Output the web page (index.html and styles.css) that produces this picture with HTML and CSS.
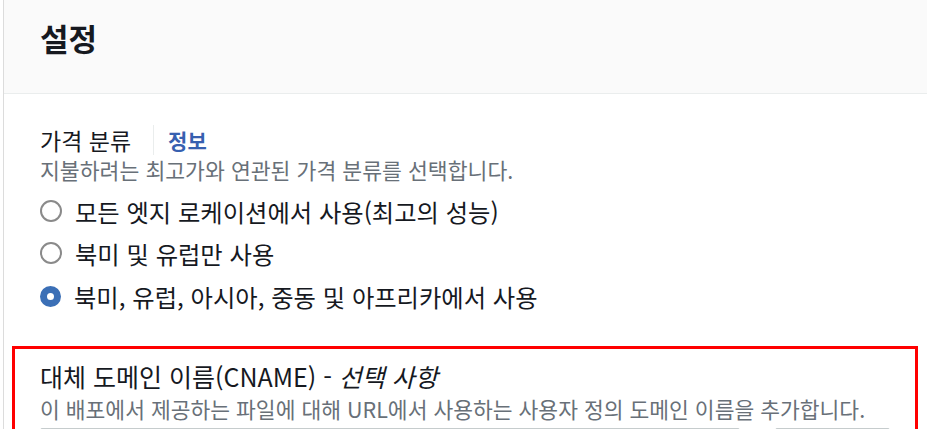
FILE: index.html
```html
<!DOCTYPE html>
<html lang="ko">
<head>
    <meta charset="UTF-8">
    <meta name="viewport" content="width=device-width, initial-scale=1.0">
    <title>설정</title>
    <link rel="stylesheet" href="styles.css">
</head>
<body>
    <div class="panel">
        <div class="panel-header">
            <h2>설정</h2>
        </div>

        <div class="panel-body">
            <div class="field">
                <div class="field-label">
                    <span>가격 분류</span>
                    <a href="#" class="info-link">정보</a>
                </div>
                <div class="field-desc">지불하려는 최고가와 연관된 가격 분류를 선택합니다.</div>
                <div class="radio-group">
                    <label class="radio-row">
                        <input type="radio" name="priceClass" value="all">
                        <span class="radio-mark"></span>
                        <span>모든 엣지 로케이션에서 사용(최고의 성능)</span>
                    </label>
                    <label class="radio-row">
                        <input type="radio" name="priceClass" value="na-eu">
                        <span class="radio-mark"></span>
                        <span>북미 및 유럽만 사용</span>
                    </label>
                    <label class="radio-row">
                        <input type="radio" name="priceClass" value="na-eu-asia" checked>
                        <span class="radio-mark"></span>
                        <span>북미, 유럽, 아시아, 중동 및 아프리카에서 사용</span>
                    </label>
                </div>
            </div>

            <div class="field highlight">
                <div class="field-label">
                    <span>대체 도메인 이름(CNAME) - <em>선택 사항</em></span>
                </div>
                <div class="field-desc">이 배포에서 제공하는 파일에 대해 URL에서 사용하는 사용자 정의 도메인 이름을 추가합니다.</div>
                <div class="input-row">
                    <input type="text" class="text-input" aria-label="CNAME">
                    <button class="btn" aria-label="제거"></button>
                </div>
            </div>
        </div>
    </div>
</body>
</html>
```

FILE: styles.css
```css
body {
    margin: 0;
    padding-left: 3px;
    font-family: "Noto Sans CJK KR", "Noto Sans", sans-serif;
    background: #fff;
    color: #16191f;
    overflow: hidden;
}
.panel {
    border-left: 1px solid #dcdcdc;
    min-height: 100vh;
}
.panel-header {
    height: 94px;
    background: #fafafa;
    border-bottom: 1px solid #eaeded;
    padding: 20px 36px 0;
    box-sizing: border-box;
}
.panel-header h2 {
    margin: 0;
    font-size: 31px;
    line-height: 36px;
    font-weight: bold;
}
.panel-body {
    padding: 31px 36px 0;
}
.field-label {
    display: flex;
    align-items: center;
    font-size: 23px;
    line-height: 30px;
}
.field-label em {
    font-style: italic;
}
.info-link {
    color: #3760b0;
    text-decoration: none;
    font-weight: bold;
    font-size: 21px;
    margin-left: 22px;
    padding-left: 14px;
    border-left: 1px solid #eaeded;
}
.field-desc {
    font-size: 21.6px;
    line-height: 26px;
    color: #687078;
    margin-top: 2px;
}
.radio-group {
    display: flex;
    flex-direction: column;
    margin-top: 7px;
}
.radio-row {
    display: flex;
    align-items: center;
    height: 42px;
    font-size: 24.3px;
    cursor: pointer;
}
.radio-row:last-child {
    height: 44px;
}
.radio-row input {
    display: none;
}
.radio-mark {
    width: 18px;
    height: 18px;
    border: 2px solid #8a8a8a;
    border-radius: 50%;
    margin-right: 13px;
    flex-shrink: 0;
}
.radio-row input:checked + .radio-mark {
    border: 7.5px solid #3b6fb6;
    width: 7px;
    height: 7px;
    background: #fff;
}
.highlight {
    margin: 28px -27px 0 -28px;
    border: 3px solid #ff0000;
    padding: 12px 25px 20px;
}
.highlight .field-label {
    font-size: 25px;
}
.highlight .field-desc {
    margin-top: 5px;
    font-size: 21.5px;
}
.input-row {
    display: flex;
    gap: 35px;
    margin-top: 6px;
}
.text-input {
    width: 703px;
    height: 34px;
    box-sizing: border-box;
    border: 1px solid #c6cccd;
    border-radius: 2px;
}
.btn {
    width: 115px;
    height: 34px;
    background: #fff;
    border: 1px solid #c6cccd;
    border-radius: 2px;
}
```
